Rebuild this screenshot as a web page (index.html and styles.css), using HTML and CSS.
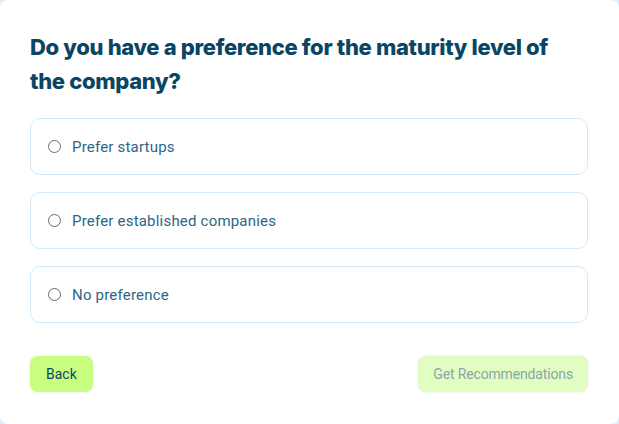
FILE: index.html
```html
<!DOCTYPE html>
<html lang="en">
<head>
<meta charset="utf-8">
<title>Maturity preference</title>
<link rel="stylesheet" href="styles.css">
</head>
<body>
<div class="card">
  <h1 class="title">Do you have a preference for the maturity level of the company?</h1>
  <div class="options">
    <label class="option"><input type="radio" name="m" class="radio"><span>Prefer startups</span></label>
    <label class="option"><input type="radio" name="m" class="radio"><span>Prefer established companies</span></label>
    <label class="option"><input type="radio" name="m" class="radio"><span>No preference</span></label>
  </div>
  <div class="actions">
    <button class="btn btn-back">Back</button>
    <button class="btn btn-next" disabled>Get Recommendations</button>
  </div>
</div>
</body>
</html>
```
FILE: styles.css
```css
html, body {
  margin: 0;
  padding: 0;
  height: 100%;
}
body {
  background: #dcecf8;
  font-family: "Roboto", "Liberation Sans", sans-serif;
}
.card {
  box-sizing: border-box;
  height: 424px;
  width: 619px;
  background: #ffffff;
  border-radius: 8px;
  padding: 30px 31px 30px 30px;
  display: flex;
  flex-direction: column;
}
.title {
  margin: 0 0 20px 0;
  font-family: "Inter", sans-serif;
  font-weight: 800;
  font-size: 22px;
  line-height: 34px;
  color: #0a4663;
  letter-spacing: -0.33px;
  width: 530px;
}
.options {
  display: flex;
  flex-direction: column;
  gap: 17px;
}
.option {
  display: flex;
  align-items: center;
  height: 57px;
  box-sizing: border-box;
  border: 1px solid #d3e9f8;
  border-radius: 10px;
  padding-left: 17px;
  font-size: 15px;
  letter-spacing: 0.2px;
  color: #2a6687;
}
.radio {
  appearance: none;
  -webkit-appearance: none;
  width: 13px;
  height: 13px;
  margin: 0 11px 0 0;
  border: 1px solid #6b6b6b;
  border-radius: 50%;
  box-sizing: border-box;
}
.actions {
  margin-top: 33px;
  display: flex;
  justify-content: space-between;
}
.btn {
  height: 36px;
  border: none;
  border-radius: 8px;
  padding: 0 16px;
  font-family: "Roboto", "Liberation Sans", sans-serif;
  font-size: 14px;
  box-shadow: 0 0 2px rgba(0,0,0,0.12);
}
.btn-back {
  background: #c8fe80;
  color: #0b4866;
}
.btn-next {
  padding: 0 15px;
  letter-spacing: -0.15px;
  background: #e2fdc2;
  color: #8aa6a8;
}
```
